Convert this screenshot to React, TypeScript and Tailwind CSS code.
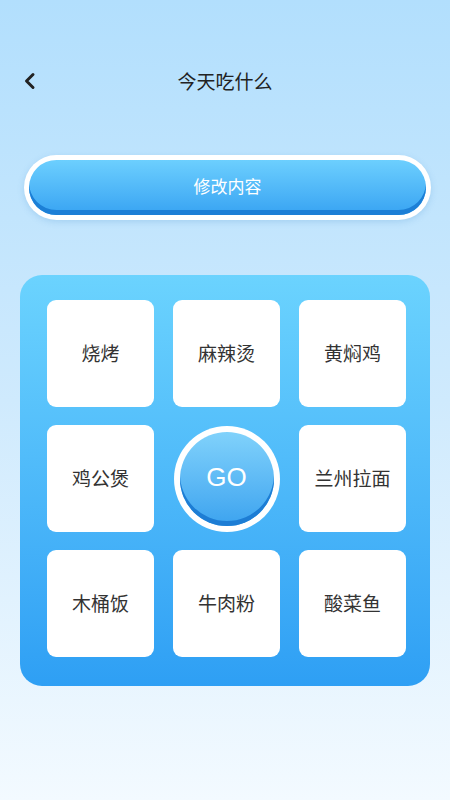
import React from 'react';

const foods = ['烧烤', '麻辣烫', '黄焖鸡', '鸡公煲', 'GO', '兰州拉面', '木桶饭', '牛肉粉', '酸菜鱼'];

export default function App() {
  return (
    <div
      className="w-[450px] h-[800px] overflow-hidden bg-gradient-to-b from-[#b2dffd] via-[#cfeafd] to-[#f3faff]"
      style={{ fontFamily: '"Noto Sans CJK SC", "Noto Sans", sans-serif' }}
    >
      {/* header */}
      <div className="relative mt-[58px] h-[46px] flex items-center justify-center">
        <button className="absolute left-[22px] top-[14px] text-[#222]">
          <svg width="16" height="18" viewBox="0 0 16 18" fill="none">
            <path d="M11 2.5 L4.5 9 L11 15.5" stroke="currentColor" strokeWidth="3" strokeLinecap="round" strokeLinejoin="round" />
          </svg>
        </button>
        <span className="text-[19px] text-[#222]">今天吃什么</span>
      </div>

      {/* edit button */}
      <div className="mt-[51px] ml-[24px] w-[407px] h-[65px] rounded-full bg-white p-[5px] shadow-[0_2px_6px_rgba(80,150,210,0.25)]">
        <div className="h-full rounded-full bg-gradient-to-b from-[#6ccffe] to-[#37a3f2] shadow-[inset_0_-5px_0_#1c7fd6] flex items-center justify-center pb-[4px]">
          <span className="text-[17px] text-white">修改内容</span>
        </div>
      </div>

      {/* grid panel */}
      <div className="mt-[55px] ml-[20px] w-[410px] h-[411px] rounded-[22px] bg-gradient-to-b from-[#6bd3fe] to-[#2e9ff4] pl-[27px] pt-[25px]">
        <div className="grid grid-cols-[107px_107px_107px] grid-rows-[107px_107px_107px] gap-x-[19px] gap-y-[18px]">
          {foods.map(f =>
            f === 'GO' ? (
              <div key={f} className="flex items-center justify-center">
                <div className="w-[106px] h-[106px] rounded-full bg-white p-[6px]">
                  <div className="w-full h-full rounded-full bg-gradient-to-b from-[#80d2fb] to-[#3ba3ef] shadow-[inset_0_-5px_0_#1d7dd4] flex items-center justify-center pb-[3px]">
                    <span className="text-[26px] text-white" style={{ fontFamily: '"Liberation Sans", Arial, sans-serif' }}>GO</span>
                  </div>
                </div>
              </div>
            ) : (
              <div key={f} className="bg-white rounded-[9px] flex items-center justify-center">
                <span className="text-[19px] text-[#333]">{f}</span>
              </div>
            )
          )}
        </div>
      </div>
    </div>
  );
}
